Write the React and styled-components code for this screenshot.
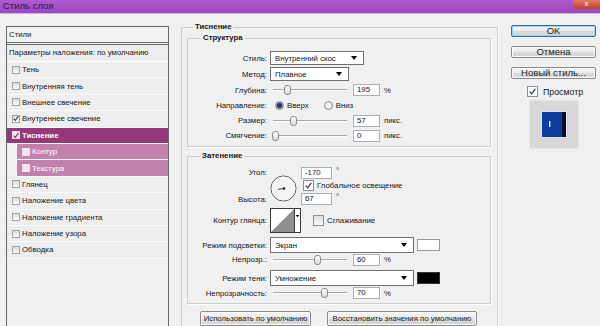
import React from 'react';
import styled, { createGlobalStyle } from 'styled-components';

const GlobalStyle = createGlobalStyle`
  html, body {
    margin: 0;
    padding: 0;
    background: #f0f0f0;
  }
  body {
    font-family: "Liberation Sans", Arial, sans-serif;
  }
`;

const Window = styled.div`
  width: 600px;
  height: 326px;
  overflow: hidden;
  background: #f0f0f0;
  font-family: "Liberation Sans", Arial, sans-serif;
  font-size: 7.8px;
  color: #161616;
  display: flex;
  flex-direction: column;
`;

const TitleBar = styled.div`
  flex: none;
  height: 13px;
  display: flex;
  justify-content: space-between;
  background: linear-gradient(#ad5bcd, #9b47be);
  border-bottom: 1px solid #cfb2dc;
`;

const Title = styled.span`
  font-size: 9.5px;
  line-height: 12px;
  padding-left: 3px;
  color: #2b1733;
`;

const CloseButton = styled.div`
  width: 27px;
  height: 9px;
  background: linear-gradient(#dd7a68, #c23f2b);
  color: #fff;
  font-size: 8px;
  line-height: 8px;
  text-align: center;
  border-radius: 0 0 3px 3px;
`;

const Body = styled.div`
  flex: 1;
  display: flex;
  align-items: flex-start;
  min-height: 0;
`;

/* ---------- left list ---------- */

const StylesPanel = styled.div`
  flex: none;
  width: 163px;
  height: 320px;
  margin: 12px 0 0 6px;
  box-sizing: border-box;
  border: 1px solid #666;
  background: #f0f0f0;
`;

const PanelHeader = styled.div`
  height: 15px;
  line-height: 15px;
  padding-left: 2px;
  background: #f3f3f3;
  border-bottom: 3px double #6a6a6a;
`;

const PanelParams = styled.div`
  height: 16px;
  line-height: 16px;
  padding-left: 2px;
  background: #eeeeee;
  border-bottom: 1px solid #fff;
`;

const StyleRow = styled.div`
  display: flex;
  align-items: center;
  height: 16.4px;
  box-sizing: border-box;
  margin-left: ${(p) => (p.$sub ? '10px' : '0')};
  padding-left: 5px;
  border-bottom: 1px solid #fbfbfb;
  background: ${(p) => (p.$selected ? '#953879' : p.$sub ? '#c381ae' : '#eeeeee')};
  color: ${(p) => (p.$selected || p.$sub ? '#fff' : '#161616')};
  font-weight: ${(p) => (p.$selected ? 'bold' : 'normal')};
`;

const ListBox = styled.span`
  flex: none;
  width: 8px;
  height: 8px;
  margin-right: 2px;
  box-sizing: border-box;
  border: 1px solid ${(p) => (p.$light ? '#f2dcea' : '#a4a4a4')};
  background: ${(p) => (p.$light ? '#f4e6ef' : 'linear-gradient(#dcdcdc, #fafafa)')};
  display: flex;
  align-items: center;
  justify-content: center;
`;

/* ---------- main area ---------- */

const Group = styled.fieldset`
  margin: ${(p) => p.$margin || '0'};
  padding: ${(p) => p.$padding || '0'};
  border: 1px solid #cdcdcd;
  box-shadow: 1px 1px 0 #fff;
  min-width: 0;
  width: ${(p) => (p.$w ? `${p.$w}px` : 'auto')};
  box-sizing: border-box;
`;

const Legend = styled.legend`
  font-weight: bold;
  font-size: 7.8px;
  line-height: 10px;
  padding: 0 2px;
  margin-left: ${(p) => p.$indent}px;
`;

const Row = styled.div`
  display: flex;
  align-items: center;
  height: ${(p) => p.$h}px;
  margin-top: ${(p) => p.$mt || 0}px;
`;

const Label = styled.span`
  flex: none;
  width: 79px;
  margin-right: 3px;
  text-align: right;
  white-space: nowrap;
`;

const SelectBox = styled.div`
  flex: none;
  width: ${(p) => p.$w}px;
  height: ${(p) => p.$h || 14}px;
  box-sizing: border-box;
  border: 1px solid #707070;
  background: #fff;
  display: flex;
  align-items: center;
  justify-content: space-between;
  padding: 0 6px 0 4px;
`;

const Arrow = styled.span`
  width: 0;
  height: 0;
  border-left: 3.5px solid transparent;
  border-right: 3.5px solid transparent;
  border-top: 4px solid #000;
`;

const SliderWrap = styled.div`
  position: relative;
  flex: none;
  width: 80px;
  height: 12px;
  margin-right: 3px;
`;

const Track = styled.div`
  position: absolute;
  left: 3px;
  right: 3px;
  top: 5px;
  height: 0;
  border-top: 1px solid #a7a7a7;
  border-bottom: 1px solid #fff;
`;

const Thumb = styled.div`
  position: absolute;
  top: 1px;
  width: 7px;
  height: 10px;
  box-sizing: border-box;
  border: 1px solid #8b8b8b;
  border-radius: 3px;
  background: linear-gradient(#ffffff, #dadada);
`;

const NumInput = styled.div`
  flex: none;
  width: ${(p) => p.$w || 27}px;
  height: 12px;
  box-sizing: border-box;
  border: 1px solid #a9b0b8;
  background: #fff;
  padding-left: 3px;
  line-height: 10px;
`;

const Unit = styled.span`
  margin-left: 4px;
  align-self: ${(p) => (p.$sup ? 'flex-start' : 'center')};
  line-height: ${(p) => (p.$sup ? '8px' : 'normal')};
`;

const RadioCircle = styled.span`
  flex: none;
  width: 9px;
  height: 9px;
  box-sizing: border-box;
  border-radius: 50%;
  border: 1px solid #8c8c8c;
  background: radial-gradient(circle, ${(p) => (p.$on ? '#27315c 0 2.2px, #9aa3bd 2.8px' : '#f8f8f8 0, #dedede 100%')});
  margin-right: 3px;
`;

const RadioItem = styled.span`
  display: flex;
  align-items: center;
  margin-left: ${(p) => p.$ml || 0}px;
`;

const CheckBox = styled.span`
  flex: none;
  width: 11px;
  height: 11px;
  box-sizing: border-box;
  border: 1px solid #8e8f8f;
  background: ${(p) => (p.$on ? '#fff' : 'linear-gradient(#dedede, #f7f7f7)')};
  display: flex;
  align-items: center;
  justify-content: center;
  margin-right: 3px;
`;

const CheckItem = styled.span`
  display: flex;
  align-items: center;
  margin-left: ${(p) => p.$ml || 0}px;
`;

const AngleGrid = styled.div`
  display: grid;
  grid-template-columns: 79px 28px 1fr;
  grid-template-rows: 13px 13px 14px;
  column-gap: 3px;
  align-items: center;
`;

const AngleDial = styled.div`
  grid-column: 2;
  grid-row: 1 / span 3;
  align-self: end;
  margin-bottom: 4px;
  width: 27px;
  height: 27px;
`;

const Cell = styled.div`
  grid-column: ${(p) => p.$col};
  grid-row: ${(p) => p.$row};
  display: flex;
  align-items: center;
  text-align: ${(p) => (p.$right ? 'right' : 'left')};
  justify-content: ${(p) => (p.$right ? 'flex-end' : 'flex-start')};
`;

const Swatch = styled.div`
  flex: none;
  width: 23px;
  height: 12px;
  margin-left: 3px;
  box-sizing: border-box;
  border: 1px solid ${(p) => (p.$color === '#000' ? '#333' : '#9a9a9a')};
  background: ${(p) => p.$color};
`;

const BottomBar = styled.div`
  display: flex;
  gap: 16px;
  margin-top: 7px;
  padding-left: 13px;
`;

const PushButton = styled.div`
  flex: none;
  width: ${(p) => p.$w}px;
  height: ${(p) => p.$h}px;
  box-sizing: border-box;
  border: 1px solid ${(p) => (p.$default ? '#3b6e96' : '#8a8a8a')};
  border-radius: 2px;
  background: linear-gradient(#f6f6f6, #e9e9e9 50%, #dcdcdc 51%, #d4d4d4);
  box-shadow: inset 0 0 0 1px ${(p) => (p.$default ? '#9fd2f1' : '#fbfbfb')};
  font-size: ${(p) => p.$fs || 7.8}px;
  line-height: ${(p) => p.$h - 2}px;
  text-align: center;
  white-space: nowrap;
  color: #222;
`;

/* ---------- right column ---------- */

const SideColumn = styled.div`
  flex: none;
  width: 85px;
  margin: 11px 0 0 13px;
  display: flex;
  flex-direction: column;
  gap: 9px;
`;

const PreviewToggle = styled.div`
  display: flex;
  align-items: center;
  margin: -2px 0 0 16px;
  height: 11px;
  font-size: 8.8px;
`;

const PreviewBox = styled.div`
  width: 48px;
  height: 47px;
  margin: -6px 0 0 18px;
  background: #d8d8d8;
  border: 1px solid #e6e6e6;
  display: flex;
  align-items: center;
  justify-content: center;
`;

const Tick = ({ color = '#333' }) => (
  <svg width="7" height="7" viewBox="0 0 7 7">
    <path d="M0.8 3.6 L2.7 5.8 L6.3 0.8" fill="none" stroke={color} strokeWidth="1.3" />
  </svg>
);

const Slider = ({ pos }) => (
  <SliderWrap>
    <Track />
    <Thumb style={{ left: pos }} />
  </SliderWrap>
);

const Select = ({ w, h, children }) => (
  <SelectBox $w={w} $h={h}>
    <span>{children}</span>
    <Arrow />
  </SelectBox>
);

const styleItems = [
  { label: 'Тень' },
  { label: 'Внутренняя тень' },
  { label: 'Внешнее свечение' },
  { label: 'Внутреннее свечение', checked: true },
  { label: 'Тиснение', checked: true, selected: true },
  { label: 'Контур', sub: true },
  { label: 'Текстура', sub: true },
  { label: 'Глянец' },
  { label: 'Наложение цвета' },
  { label: 'Наложение градиента' },
  { label: 'Наложение узора' },
  { label: 'Обводка' },
];

const App = () => (
  <Window>
    <GlobalStyle />
    <TitleBar>
      <Title>Стиль слоя</Title>
      <CloseButton>x</CloseButton>
    </TitleBar>
    <Body>
      <StylesPanel>
        <PanelHeader>Стили</PanelHeader>
        <PanelParams>Параметры наложения: по умолчанию</PanelParams>
        {styleItems.map((item) => (
          <StyleRow key={item.label} $sub={item.sub} $selected={item.selected}>
            <ListBox $light={item.sub || item.selected}>
              {item.checked && <Tick color={item.selected ? '#7a2a63' : '#444'} />}
            </ListBox>
            {item.label}
          </StyleRow>
        ))}
      </StylesPanel>

      <Group $margin="8px 0 0 12px" $padding="0 6px 0 5px" $w={317} style={{ height: 330 }}>
        <Legend $indent={6}>Тиснение</Legend>

        <Group $margin="1px 0 0 0" $padding="7px 0 3px 0">
          <Legend $indent={13}>Структура</Legend>
          <Row $h={16}>
            <Label>Стиль:</Label>
            <Select w={94}>Внутренний скос</Select>
          </Row>
          <Row $h={16}>
            <Label>Метод:</Label>
            <Select w={79}>Плавное</Select>
          </Row>
          <Row $h={16}>
            <Label>Глубина:</Label>
            <Slider pos={14} />
            <NumInput>195</NumInput>
            <Unit>%</Unit>
          </Row>
          <Row $h={15}>
            <Label>Направление:</Label>
            <RadioItem $ml={5}>
              <RadioCircle $on />
              Вверх
            </RadioItem>
            <RadioItem $ml={15}>
              <RadioCircle />
              Вниз
            </RadioItem>
          </Row>
          <Row $h={15}>
            <Label>Размер:</Label>
            <Slider pos={20} />
            <NumInput>57</NumInput>
            <Unit>пикс.</Unit>
          </Row>
          <Row $h={15}>
            <Label>Смягчение:</Label>
            <Slider pos={2} />
            <NumInput>0</NumInput>
            <Unit>пикс.</Unit>
          </Row>
        </Group>

        <Group $margin="4px 0 0 0" $padding="5px 0 3px 0">
          <Legend $indent={12}>Затенение</Legend>
          <AngleGrid>
            <Cell $col={1} $row={1} $right>Угол:</Cell>
            <AngleDial>
              <svg width="27" height="27" viewBox="0 0 27 27">
                <circle cx="13.5" cy="13.5" r="12.5" fill="#f4f4f4" stroke="#555" strokeWidth="1" />
                <circle cx="13.5" cy="13.5" r="11.5" fill="none" stroke="#fff" strokeWidth="0.8" />
                <line x1="13.5" y1="13.5" x2="8" y2="14.4" stroke="#333" strokeWidth="0.9" />
                <circle cx="14" cy="13.5" r="1.3" fill="#222" />
              </svg>
            </AngleDial>
            <Cell $col={3} $row={1}>
              <NumInput $w={31}>-170</NumInput>
              <Unit $sup>°</Unit>
            </Cell>
            <Cell $col={3} $row={2}>
              <CheckItem $ml={2}>
                <CheckBox $on>
                  <Tick color="#2d3f66" />
                </CheckBox>
                Глобальное освещение
              </CheckItem>
            </Cell>
            <Cell $col={1} $row={3} $right>Высота:</Cell>
            <Cell $col={3} $row={3}>
              <NumInput $w={31}>67</NumInput>
              <Unit $sup>°</Unit>
            </Cell>
          </AngleGrid>

          <Row $h={24} $mt={2}>
            <Label>Контур глянца:</Label>
            <svg width="31" height="25" viewBox="0 0 31 25">
              <rect x="0.5" y="0.5" width="30" height="24" fill="#fff" stroke="#3a3a3a" />
              <polygon points="1,24 24,1 24,24" fill="#8f8f8f" />
              <line x1="24.5" y1="0.5" x2="24.5" y2="24.5" stroke="#3a3a3a" />
              <polygon points="25.8,7 29.2,7 27.5,9.2" fill="#000" />
            </svg>
            <CheckItem $ml={12}>
              <CheckBox />
              Сглаживание
            </CheckItem>
          </Row>
          <Row $h={16} $mt={5}>
            <Label>Режим подсветки:</Label>
            <Select w={144} h={16}>Экран</Select>
            <Swatch $color="#fff" />
          </Row>
          <Row $h={13}>
            <Label>Непрозр.:</Label>
            <Slider pos={44} />
            <NumInput>60</NumInput>
            <Unit>%</Unit>
          </Row>
          <Row $h={16} $mt={4}>
            <Label>Режим тени:</Label>
            <Select w={144} h={16}>Умножение</Select>
            <Swatch $color="#000" />
          </Row>
          <Row $h={14}>
            <Label>Непрозрачность:</Label>
            <Slider pos={51} />
            <NumInput>70</NumInput>
            <Unit>%</Unit>
          </Row>
        </Group>

        <BottomBar>
          <PushButton $w={111} $h={15}>Использовать по умолчанию</PushButton>
          <PushButton $w={150} $h={15}>Восстановить значения по умолчанию</PushButton>
        </BottomBar>
      </Group>

      <SideColumn>
        <PushButton $w={85} $h={12} $fs={9.5} $default>OK</PushButton>
        <PushButton $w={85} $h={12} $fs={9.5}>Отмена</PushButton>
        <PushButton $w={85} $h={12} $fs={9.5}>Новый стиль...</PushButton>
        <PreviewToggle>
          <CheckBox $on>
            <Tick color="#2d3f66" />
          </CheckBox>
          <span style={{ marginLeft: 2 }}>Просмотр</span>
        </PreviewToggle>
        <PreviewBox>
          <svg width="26" height="27" viewBox="0 0 26 27">
            <rect x="0" y="0" width="26" height="27" fill="#dfe6f3" />
            <rect x="1" y="1" width="24" height="25" fill="#0b3c9e" />
            <rect x="21" y="1" width="4" height="25" fill="#0b0f1e" />
            <rect x="8" y="10" width="1.4" height="6" fill="#e8efff" />
          </svg>
        </PreviewBox>
      </SideColumn>
    </Body>
  </Window>
);

export default App;
